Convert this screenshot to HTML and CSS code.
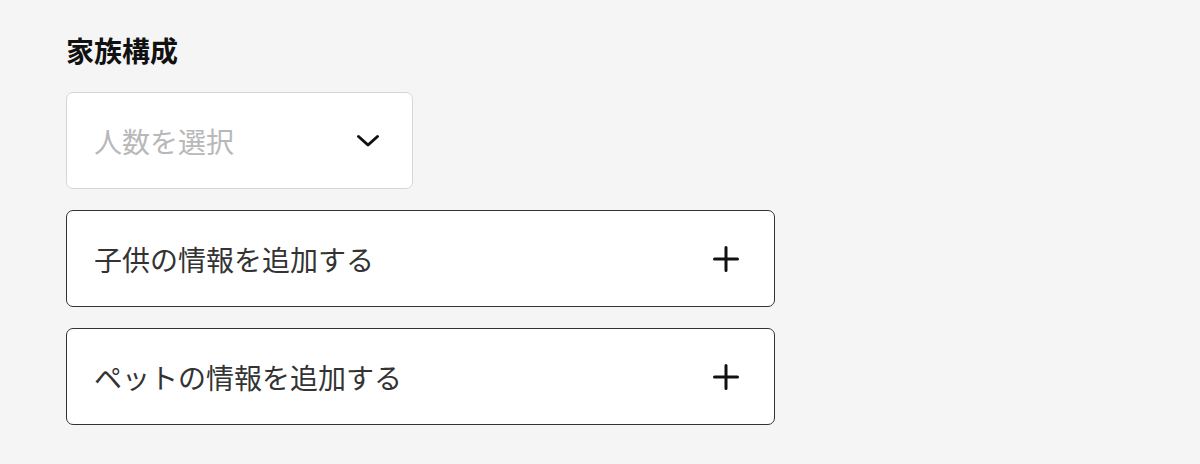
FILE: index.html
```html
<!DOCTYPE html>
<html lang="ja">
<head>
    <meta charset="UTF-8">
    <meta name="viewport" content="width=device-width, initial-scale=1.0">
    <title>家族構成</title>
    <link rel="stylesheet" href="styles.css">
</head>
<body>
    <div class="container">
        <h2 class="label">家族構成</h2>
        <div class="select">
            <span class="placeholder">人数を選択</span>
            <svg class="chevron" width="24" height="14" viewBox="0 0 24 14">
                <path d="M2.5 2.5 L12 11 L21.5 2.5" fill="none" stroke="#111" stroke-width="3" stroke-linecap="round" stroke-linejoin="round"/>
            </svg>
        </div>
        <button type="button" class="add_btn">
            <span>子供の情報を追加する</span>
            <svg class="plus" width="28" height="28" viewBox="0 0 28 28">
                <path d="M14 2.5 V25.5 M2.5 14 H25.5" fill="none" stroke="#111" stroke-width="3" stroke-linecap="round"/>
            </svg>
        </button>
        <button type="button" class="add_btn">
            <span>ペットの情報を追加する</span>
            <svg class="plus" width="28" height="28" viewBox="0 0 28 28">
                <path d="M14 2.5 V25.5 M2.5 14 H25.5" fill="none" stroke="#111" stroke-width="3" stroke-linecap="round"/>
            </svg>
        </button>
    </div>
</body>
</html>
```

FILE: styles.css
```css
body {
    margin: 0;
    background-color: #f5f5f5;
    font-family: "Noto Sans CJK JP", "Noto Sans", sans-serif;
}

.container {
    display: flex;
    flex-direction: column;
    align-items: flex-start;
    gap: 21px;
    padding: 30px 66px;
    width: 709px;
}

.label {
    margin: 0;
    font-size: 28px;
    font-weight: 700;
    line-height: 41px;
    color: #111;
}

.select {
    display: flex;
    justify-content: space-between;
    align-items: center;
    box-sizing: border-box;
    width: 347px;
    height: 97px;
    padding: 0 32px 0 27px;
    background-color: #fff;
    border: 1.5px solid #d6d6d6;
    border-radius: 7px;
}

.placeholder {
    font-size: 28px;
    color: #b8b8b8;
}

.add_btn {
    display: flex;
    justify-content: space-between;
    align-items: center;
    box-sizing: border-box;
    width: 709px;
    height: 97px;
    padding: 0 34px 0 27px;
    background-color: #fff;
    border: 1.5px solid #333;
    border-radius: 7px;
    font-family: inherit;
    font-size: 28px;
    color: #333;
    cursor: pointer;
}
```
